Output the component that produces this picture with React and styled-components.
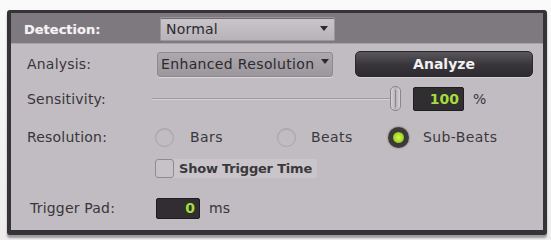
import React from "react";
import styled, { createGlobalStyle } from "styled-components";

const Global = createGlobalStyle`
  html, body { margin: 0; padding: 0; background: #f7f7f7; }
  body { font-family: "DejaVu Sans", "Liberation Sans", sans-serif; }
`;

const Page = styled.div`
  width: 551px;
  height: 240px;
  padding: 10px 0 0 7px;
  box-sizing: border-box;
  background: linear-gradient(#fafafa, #ededed);
`;

const Frame = styled.div`
  width: 540px;
  height: 225px;
  box-sizing: border-box;
  border-style: solid;
  border-color: #363338;
  border-width: 3px 4px 5px 4px;
  border-radius: 3px;
  background: #c1bcc2;
  display: flex;
  flex-direction: column;
  box-shadow: 0 3px 2px rgba(0,0,0,0.35);
`;

const Header = styled.div`
  height: 31px;
  flex: none;
  background: #7e797f;
  display: flex;
  align-items: center;
  padding: 2px 0 0 13px;
  border-bottom: 1px solid #a9a4aa;
  box-sizing: border-box;
`;

const HeaderLabel = styled.div`
  width: 136px;
  color: #f4f2f4;
  font-weight: bold;
  font-size: 13px;
  text-shadow: 0 0 1px rgba(255,255,255,0.4);
`;

const Select = styled.div`
  position: relative;
  width: ${(p) => p.$w}px;
  height: ${(p) => p.$h}px;
  box-sizing: border-box;
  display: flex;
  align-items: center;
  padding-left: ${(p) => p.$pl}px;
  font-size: 14px;
  letter-spacing: ${(p) => p.$ls}px;
  color: #2c2a2d;
  background: ${(p) => p.$bg};
  border: 1px solid ${(p) => p.$border};
  border-radius: ${(p) => p.$r}px;
  box-shadow: ${(p) => p.$shadow};
  white-space: nowrap;
`;

const Arrow = styled.span`
  position: absolute;
  right: ${(p) => p.$right}px;
  top: ${(p) => p.$top}px;
  width: 0;
  height: 0;
  border-left: 4px solid transparent;
  border-right: 4px solid transparent;
  border-top: 5px solid #2c2a2d;
`;

const Content = styled.div`
  flex: 1;
  display: flex;
  flex-direction: column;
  padding-top: 5px;
`;

const Row = styled.div`
  height: ${(p) => p.$h}px;
  margin-top: ${(p) => p.$mt || 0}px;
  display: flex;
  align-items: center;
  flex: none;
`;

const Label = styled.div`
  width: ${(p) => 146 - (p.$pl || 16)}px;
  padding-left: ${(p) => p.$pl || 16}px;
  flex: none;
  font-size: 14px;
  letter-spacing: 0.2px;
  color: #38363a;
`;

const AnalyzeButton = styled.div`
  margin-left: 22px;
  width: 178px;
  height: 26px;
  box-sizing: border-box;
  border-radius: 5px;
  border: 1px solid #2a282b;
  background: linear-gradient(#5a575c, #38353a 55%, #2e2c30);
  color: #f2f0f2;
  font-weight: bold;
  font-size: 14px;
  display: flex;
  align-items: center;
  justify-content: center;
  box-shadow: 0 1px 1px rgba(255,255,255,0.35);
`;

const SliderArea = styled.div`
  position: relative;
  margin-left: -5px;
  width: 251px;
  height: 38px;
  flex: none;
`;

const Track = styled.div`
  position: absolute;
  left: 0;
  right: 10px;
  top: 18px;
  height: 1px;
  background: #9e9aa0;
  border-bottom: 1px solid #d4d0d5;
`;

const Handle = styled.div`
  position: absolute;
  left: 238px;
  top: 6px;
  width: 11px;
  height: 25px;
  box-sizing: border-box;
  border-radius: 5px;
  border: 1px solid #8a868c;
  background: linear-gradient(90deg, #d6d2d7, #b3afb5 50%, #d6d2d7);
  &::after {
    content: "";
    position: absolute;
    left: 4px;
    top: 3px;
    bottom: 3px;
    width: 1px;
    background: #8a868c;
  }
`;

const ValueBox = styled.div`
  width: ${(p) => p.$w}px;
  height: ${(p) => p.$h}px;
  margin-left: ${(p) => p.$ml}px;
  box-sizing: border-box;
  border-radius: 2px;
  background: #302e31;
  border: 1px solid #1f1d20;
  display: flex;
  align-items: center;
  justify-content: flex-end;
  padding-right: 4px;
  color: #a5dc3c;
  font-size: 14px;
  font-weight: bold;
`;

const Unit = styled.div`
  margin-left: ${(p) => p.$ml}px;
  font-size: 14px;
  color: #38363a;
`;

const RadioGroup = styled.div`
  display: flex;
  align-items: center;
  margin-left: -2px;
`;

const RadioItem = styled.div`
  display: flex;
  align-items: center;
  width: ${(p) => p.$w}px;
  flex: none;
`;

const RadioCircle = styled.div`
  width: ${(p) => (p.$on ? 21 : 19)}px;
  height: ${(p) => (p.$on ? 21 : 19)}px;
  margin-left: ${(p) => (p.$on ? -1 : 0)}px;
  box-sizing: border-box;
  border-radius: 50%;
  flex: none;
  border: ${(p) => (p.$on ? "5px solid #3b3a36" : "1px solid #a8a4aa")};
  background: ${(p) =>
    p.$on ? "radial-gradient(circle, #d2f54a 0, #a6d82e 55%, #6f8f26 100%)" : "transparent"};
  box-shadow: ${(p) => (p.$on ? "0 0 2px rgba(0,0,0,0.5)" : "inset 0 1px 1px rgba(0,0,0,0.08)")};
`;

const RadioText = styled.span`
  margin-left: ${(p) => p.$ml}px;
  font-size: 14px;
  letter-spacing: 0.4px;
  color: #3a383c;
`;

const CheckRow = styled.div`
  display: flex;
  align-items: center;
  margin-left: 144px;
  padding-right: 5px;
  background: #c9c5ca;
  border-radius: 2px;
`;

const CheckBox = styled.div`
  width: 19px;
  height: 19px;
  box-sizing: border-box;
  border: 1px solid #8f8b91;
  border-radius: 3px;
  background: #c6c2c7;
  flex: none;
`;

const CheckText = styled.span`
  margin-left: 5px;
  font-size: 13px;
  font-weight: bold;
  letter-spacing: -0.2px;
  color: #3a383c;
`;

export default function App() {
  return (
    <>
      <Global />
      <Page>
        <Frame>
          <Header>
            <HeaderLabel>Detection:</HeaderLabel>
            <Select
              $w={175}
              $h={24}
              $pl={5}
              $ls={0.2}
              $bg="linear-gradient(#c9c5ca, #b7b3b8)"
              $border="#9a969c"
              $r={1}
              $shadow="inset 0 1px 0 #6e6a70"
            >
              Normal
              <Arrow $right={6} $top={8} />
            </Select>
          </Header>
          <Content>
            <Row $h={30}>
              <Label>Analysis:</Label>
              <Select
                $w={176}
                $h={25}
                $pl={3}
                $ls={0.35}
                $bg="linear-gradient(#aca8ae, #9b979d)"
                $border="#8e8a90"
                $r={3}
                $shadow="0 1px 0 rgba(255,255,255,0.4)"
              >
                Enhanced Resolution
                <Arrow $right={3} $top={6} />
              </Select>
              <AnalyzeButton>Analyze</AnalyzeButton>
            </Row>
            <Row $h={40}>
              <Label>Sensitivity:</Label>
              <SliderArea>
                <Track />
                <Handle />
              </SliderArea>
              <ValueBox $w={51} $h={24} $ml={10}>100</ValueBox>
              <Unit $ml={9}>%</Unit>
            </Row>
            <Row $h={36}>
              <Label>Resolution:</Label>
              <RadioGroup>
                <RadioItem $w={122}>
                  <RadioCircle />
                  <RadioText $ml={16}>Bars</RadioText>
                </RadioItem>
                <RadioItem $w={112}>
                  <RadioCircle />
                  <RadioText $ml={15}>Beats</RadioText>
                </RadioItem>
                <RadioItem $w={130}>
                  <RadioCircle $on />
                  <RadioText $ml={14}>Sub-Beats</RadioText>
                </RadioItem>
              </RadioGroup>
            </Row>
            <Row $h={26}>
              <CheckRow>
                <CheckBox />
                <CheckText>Show Trigger Time</CheckText>
              </CheckRow>
            </Row>
            <Row $h={24} $mt={15}>
              <Label $pl={19}>Trigger Pad:</Label>
              <ValueBox $w={44} $h={21} $ml={-1}>0</ValueBox>
              <Unit $ml={9}>ms</Unit>
            </Row>
          </Content>
        </Frame>
      </Page>
    </>
  );
}
